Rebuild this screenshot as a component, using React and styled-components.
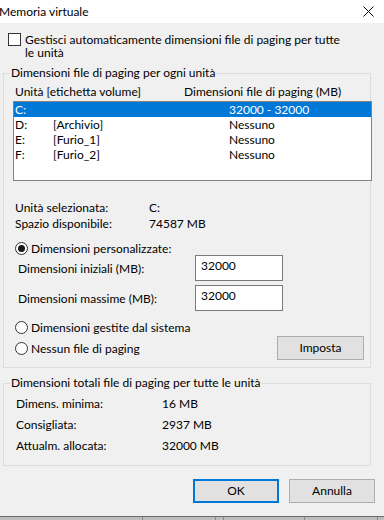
import React from "react";
import styled, { createGlobalStyle } from "styled-components";

const GlobalStyle = createGlobalStyle`
  html, body { margin: 0; padding: 0; }
  body {
    width: 384px;
    height: 520px;
    overflow: hidden;
    font-family: "Segoe UI", Lato, "Noto Sans", sans-serif;
    font-size: 12px;
    color: #000;
    background: #f0f0f0;
  }
  * { box-sizing: border-box; }
`;

const Window = styled.div`
  width: 384px;
  height: 520px;
  display: flex;
  flex-direction: column;
  background: #f0f0f0;
`;

const TitleBar = styled.div`
  height: 23px;
  flex: none;
  background: #fff;
  display: flex;
  align-items: center;
  justify-content: space-between;
  padding: 0 10px 0 0;
`;

const TitleText = styled.span`
  margin-left: -1px;
  font-size: 12px;
  line-height: 16px;
  margin-top: 1px;
`;

const Body = styled.div`
  flex: 1;
  display: flex;
  flex-direction: column;
  padding: 10px 13px 0 3px;
`;

const CheckRow = styled.label`
  display: flex;
  align-items: flex-start;
  gap: 4px;
  margin-left: 5px;
`;

const CheckBox = styled.span`
  flex: none;
  width: 13px;
  height: 13px;
  border: 1px solid #333;
  background: #fff;
`;

const CheckText = styled.span`
  line-height: 13px;
  width: 326px;
`;

const Group = styled.fieldset`
  margin: ${(p) => p.$mt}px 0 0 0;
  padding: 0;
  border: 1px solid #dcdcdc;
  min-width: 0;
  width: 368px;
`;

const Legend = styled.legend`
  margin-left: 6px;
  padding: 0 1px;
  line-height: 14px;
  font-size: 12px;
`;

const GroupInner = styled.div`
  display: flex;
  flex-direction: column;
  padding: ${(p) => p.$pad};
`;

const HeaderRow = styled.div`
  display: flex;
  line-height: 15px;
  padding-left: 2px;
`;

const HeaderCell = styled.span`
  width: ${(p) => (p.$w ? `${p.$w}px` : "auto")};
  flex: none;
`;

const ListBox = styled.div`
  margin-top: 2px;
  width: 359px;
  height: 80px;
  border: 1px solid #828282;
  background: #fff;
  display: flex;
  flex-direction: column;
`;

const ListRow = styled.div`
  display: flex;
  height: 15px;
  line-height: 15px;
  padding-left: 1px;
  background: ${(p) => (p.$sel ? "#0078d7" : "transparent")};
  color: ${(p) => (p.$sel ? "#fff" : "#000")};
`;

const Cell = styled.span`
  flex: none;
  width: ${(p) => (p.$w ? `${p.$w}px` : "auto")};
  white-space: nowrap;
`;

const InfoBlock = styled.div`
  margin-top: 18px;
  display: flex;
  flex-direction: column;
`;

const InfoRow = styled.div`
  display: flex;
  height: ${(p) => p.$h}px;
  align-items: center;
  padding-left: ${(p) => p.$pl}px;
`;

const InfoLabel = styled.span`
  flex: none;
  width: ${(p) => p.$w}px;
`;

const RadioRow = styled.label`
  display: flex;
  align-items: center;
  gap: 3px;
  height: ${(p) => p.$h}px;
  margin-top: ${(p) => p.$mt}px;
  padding-left: 2px;
`;

const Radio = styled.span`
  flex: none;
  width: 13px;
  height: 13px;
  border-radius: 50%;
  border: 1px solid #333;
  background: #fff;
  display: flex;
  align-items: center;
  justify-content: center;
  &::after {
    content: "";
    width: 7px;
    height: 7px;
    border-radius: 50%;
    background: #1a1a1a;
    display: ${(p) => (p.$on ? "block" : "none")};
  }
`;

const FieldRow = styled.div`
  display: flex;
  align-items: center;
  margin-top: ${(p) => p.$mt}px;
  padding-left: 5px;
`;

const FieldLabel = styled.span`
  flex: none;
  width: 177px;
`;

const TextInput = styled.div`
  width: 88px;
  height: 26px;
  border: 1px solid #7a7a7a;
  background: #fff;
  padding: 2px 5px 0;
  line-height: 15px;
`;

const OptionsRow = styled.div`
  display: flex;
  align-items: center;
  justify-content: space-between;
  height: 24px;
  margin-top: 1px;
`;

const Button = styled.button`
  font: inherit;
  color: #000;
  width: ${(p) => p.$w}px;
  height: 24px;
  background: #e1e1e1;
  border: ${(p) => (p.$focus ? "2px solid #0078d7" : "1px solid #adadad")};
  padding: 0;
  line-height: 16px;
  margin-right: ${(p) => p.$mr || 0}px;
`;

const ButtonRow = styled.div`
  display: flex;
  justify-content: flex-end;
  gap: 10px;
  margin-top: 13px;
  margin-right: -4px;
`;

const Spacer = styled.div`
  flex: 1;
`;

const TaskStrip = styled.div`
  flex: none;
  height: 4px;
  border-top: 1px solid #6b6b6b;
  background: #bdbdbd;
  display: flex;
`;

const TaskSeg = styled.span`
  flex: none;
  width: ${(p) => p.$w}px;
  border-right: 1px solid #8a8a8a;
`;

const CloseIcon = () => (
  <svg width="11" height="11" viewBox="0 0 11 11" style={{ display: "block" }}>
    <path d="M0.5 0.5 L10.5 10.5 M10.5 0.5 L0.5 10.5" stroke="#000" strokeWidth="1" fill="none" />
  </svg>
);

const drives = [
  { d: "C:", l: "", s: "32000 - 32000", sel: true },
  { d: "D:", l: "[Archivio]", s: "Nessuno" },
  { d: "E:", l: "[Furio_1]", s: "Nessuno" },
  { d: "F:", l: "[Furio_2]", s: "Nessuno" },
];

export default function App() {
  return (
    <>
      <GlobalStyle />
      <Window>
        <TitleBar>
          <TitleText>Memoria virtuale</TitleText>
          <CloseIcon />
        </TitleBar>
        <Body>
          <CheckRow>
            <CheckBox />
            <CheckText>Gestisci automaticamente dimensioni file di paging per tutte le unità</CheckText>
          </CheckRow>

          <Group $mt={7}>
            <Legend>Dimensioni file di paging per ogni unità</Legend>
            <GroupInner $pad="4px 0 7px 9px">
              <HeaderRow>
                <HeaderCell $w={169}>Unità [etichetta volume]</HeaderCell>
                <HeaderCell>Dimensioni file di paging (MB)</HeaderCell>
              </HeaderRow>
              <ListBox>
                {drives.map((r) => (
                  <ListRow key={r.d} $sel={r.sel}>
                    <Cell $w={38}>{r.d}</Cell>
                    <Cell $w={176}>{r.l}</Cell>
                    <Cell>{r.s}</Cell>
                  </ListRow>
                ))}
              </ListBox>
              <InfoBlock>
                <InfoRow $h={16} $pl={2}>
                  <InfoLabel $w={134}>Unità selezionata:</InfoLabel>
                  <span>C:</span>
                </InfoRow>
                <InfoRow $h={16} $pl={2}>
                  <InfoLabel $w={134}>Spazio disponibile:</InfoLabel>
                  <span>74587 MB</span>
                </InfoRow>
              </InfoBlock>
              <RadioRow $h={14} $mt={10}>
                <Radio $on />
                <span>Dimensioni personalizzate:</span>
              </RadioRow>
              <FieldRow $mt={0}>
                <FieldLabel>Dimensioni iniziali (MB):</FieldLabel>
                <TextInput>32000</TextInput>
              </FieldRow>
              <FieldRow $mt={4}>
                <FieldLabel>Dimensioni massime (MB):</FieldLabel>
                <TextInput>32000</TextInput>
              </FieldRow>
              <RadioRow $h={16} $mt={8}>
                <Radio />
                <span>Dimensioni gestite dal sistema</span>
              </RadioRow>
              <OptionsRow>
                <RadioRow $h={24} $mt={0}>
                  <Radio />
                  <span>Nessun file di paging</span>
                </RadioRow>
                <Button $w={87} $mr={6}>Imposta</Button>
              </OptionsRow>
            </GroupInner>
          </Group>

          <Group $mt={8}>
            <Legend>Dimensioni totali file di paging per tutte le unità</Legend>
            <GroupInner $pad="3px 0 9px 12px">
              <InfoRow $h={21} $pl={0}>
                <InfoLabel $w={146}>Dimens. minima:</InfoLabel>
                <span>16 MB</span>
              </InfoRow>
              <InfoRow $h={21} $pl={0}>
                <InfoLabel $w={146}>Consigliata:</InfoLabel>
                <span>2937 MB</span>
              </InfoRow>
              <InfoRow $h={21} $pl={0}>
                <InfoLabel $w={146}>Attualm. allocata:</InfoLabel>
                <span>32000 MB</span>
              </InfoRow>
            </GroupInner>
          </Group>

          <ButtonRow>
            <Button $w={86} $focus>OK</Button>
            <Button $w={86}>Annulla</Button>
          </ButtonRow>
          <Spacer />
        </Body>
        <TaskStrip>
          <TaskSeg $w={143} />
          <TaskSeg $w={73} />
          <TaskSeg $w={8} />
          <TaskSeg $w={81} />
          <TaskSeg $w={73} />
        </TaskStrip>
      </Window>
    </>
  );
}
